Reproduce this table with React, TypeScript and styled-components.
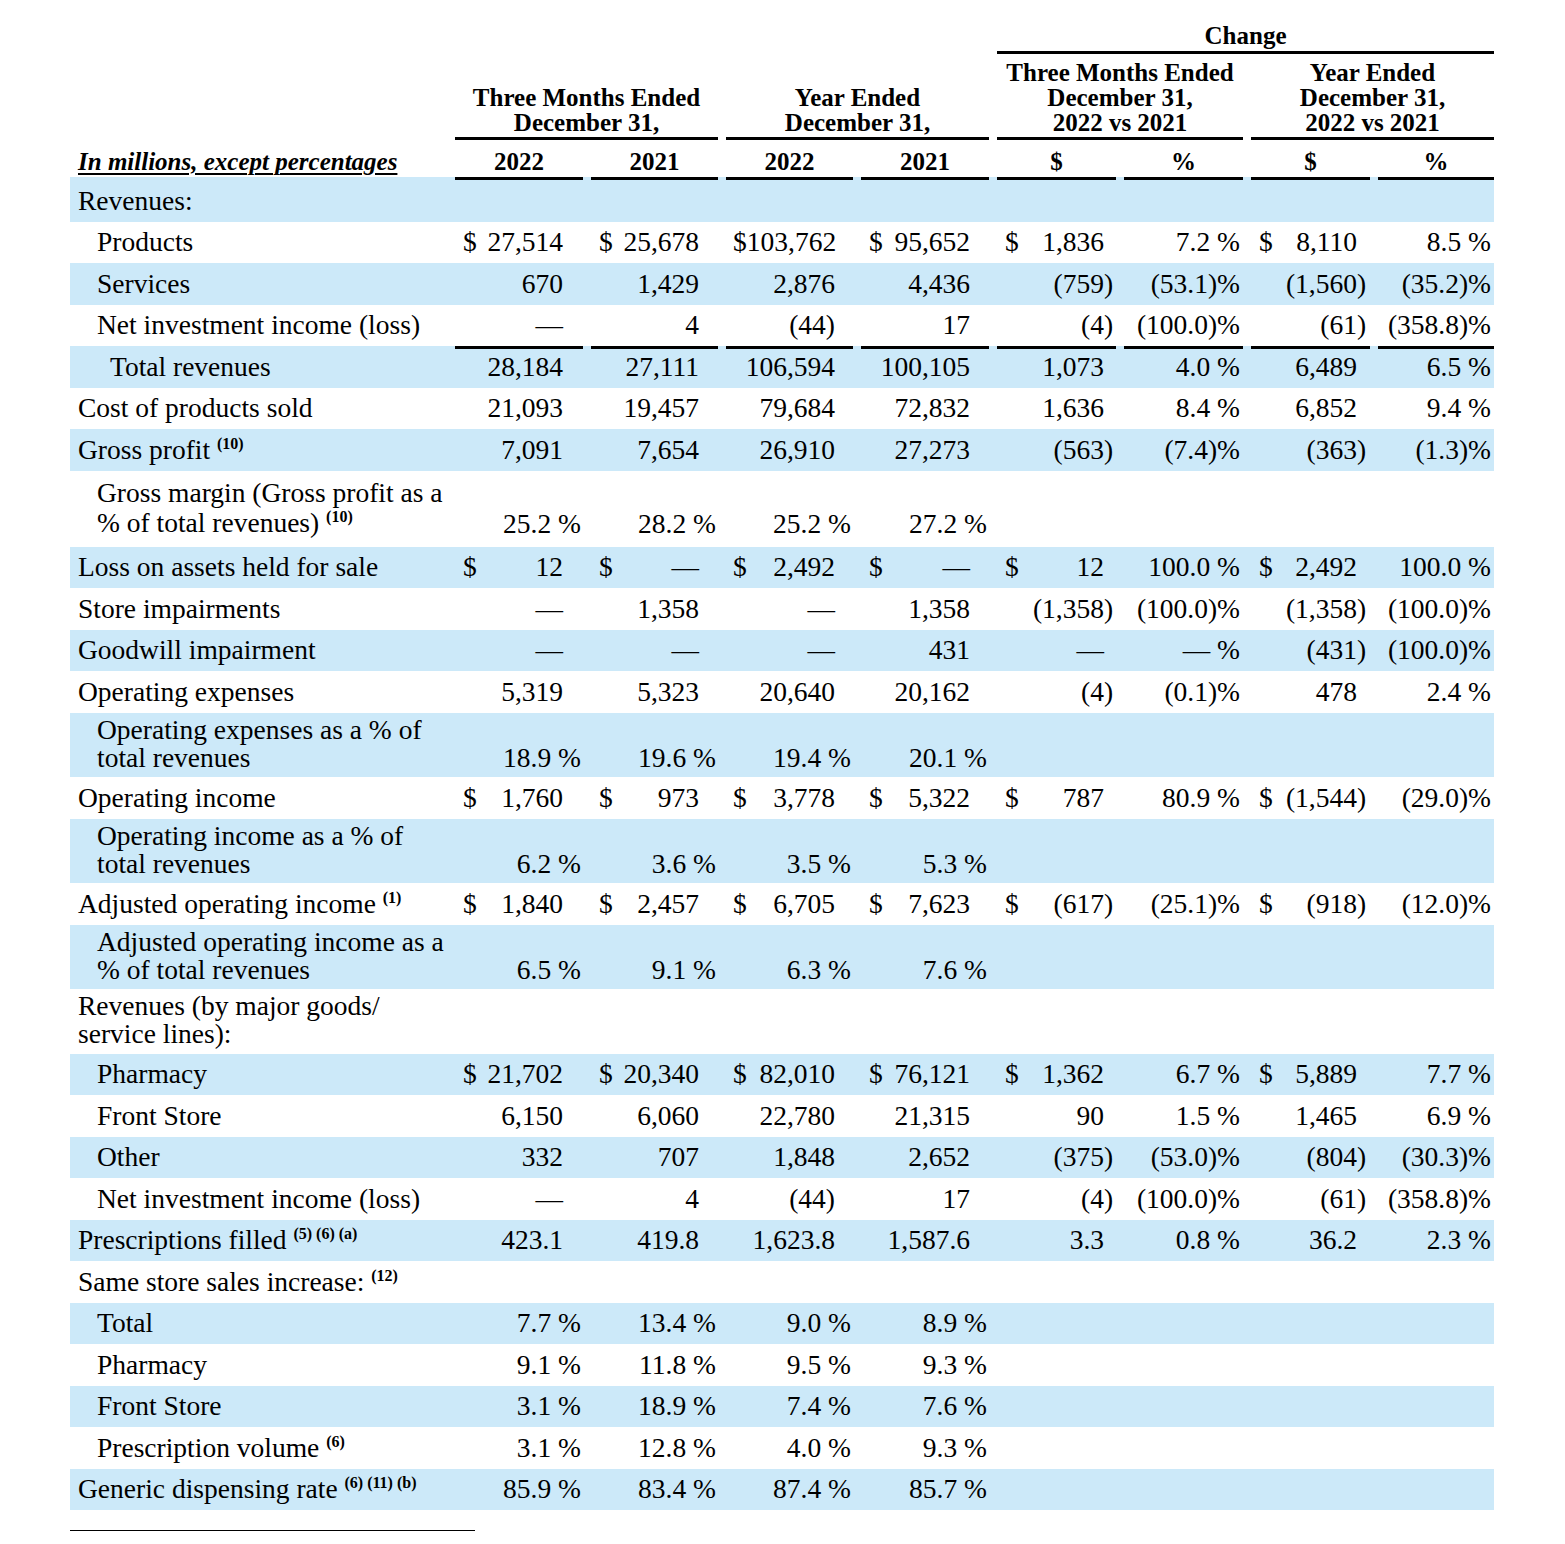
import React from 'react';
import styled, { createGlobalStyle } from 'styled-components';

const GlobalStyle = createGlobalStyle`
  html, body { margin: 0; padding: 0; background: #ffffff; }
  body { font-family: "Liberation Serif", "Times New Roman", serif; color: #000; }
`;

const COLS = '377px 128px 127px 127px 128px 119px 119px 119px 116px';
const BLUE = '#cce9f9';

const Page = styled.div`
  width: 1424px;
  padding: 0 0 40px 70px;
`;

const HeadRow = styled.div<{ $pt: number }>`
  display: grid;
  grid-template-columns: ${COLS};
  column-gap: 8px;
  align-items: end;
  padding-top: ${(p) => p.$pt}px;
  font-weight: 700;
  font-size: 25px;
  line-height: 25px;
`;

const HeadCell = styled.div<{ $col: number; $span?: number; $rule?: boolean; $pb?: number }>`
  grid-column: ${(p) => p.$col} / span ${(p) => p.$span ?? 1};
  text-align: center;
  white-space: nowrap;
  padding-bottom: ${(p) => p.$pb ?? 0}px;
  border-bottom: ${(p) => (p.$rule ? '3px solid #000' : '0')};
`;

const UnitsLabel = styled.div<{ $pb: number }>`
  grid-column: 1 / span 1;
  padding-left: 8px;
  padding-bottom: ${(p) => p.$pb}px;
  font-style: italic;
  text-decoration: underline;
  text-decoration-thickness: 2px;
  text-underline-offset: 3px;
  white-space: nowrap;
`;

const Row = styled.div<{ $h: number; $pb: number; $shade: boolean }>`
  display: grid;
  grid-template-columns: ${COLS};
  column-gap: 8px;
  box-sizing: border-box;
  height: ${(p) => p.$h}px;
  padding-bottom: ${(p) => p.$pb}px;
  background: ${(p) => (p.$shade ? BLUE : 'transparent')};
  font-size: 27.5px;
  line-height: 28px;
`;

const Label = styled.div<{ $indent: number; $lh: number }>`
  align-self: end;
  padding-left: ${(p) => p.$indent}px;
  line-height: ${(p) => p.$lh}px;
  white-space: nowrap;
`;

const Value = styled.div<{ $pl: number; $pr: number; $rule: boolean }>`
  display: flex;
  justify-content: space-between;
  align-items: flex-end;
  padding: 0 ${(p) => p.$pr}px 0 ${(p) => p.$pl}px;
  border-top: ${(p) => (p.$rule ? '3px solid #000' : '0')};
  white-space: nowrap;
`;

const Hang = styled.span`
  margin-right: -0.333em;
`;

const Sup = styled.sup`
  font-size: 16px;
  font-weight: 700;
  line-height: 0;
  vertical-align: baseline;
  position: relative;
  top: -10px;
`;

const FootRule = styled.div`
  width: 405px;
  margin-top: 20px;
  border-top: 1px solid #000;
`;

type Kind = 'single' | 'double' | 'tall';

interface RowDef {
  label: React.ReactNode;
  indent: number;
  vals?: string[];
  kind?: Kind;
  ruleAbove?: boolean;
}

const CFG = [
  { pl: 8, numPr: 20, pctPr: 2, hang: false },
  { pl: 8, numPr: 19, pctPr: 2, hang: false },
  { pl: 7, numPr: 18, pctPr: 2, hang: false },
  { pl: 8, numPr: 19, pctPr: 2, hang: false },
  { pl: 8, numPr: 12, pctPr: 3, hang: true },
  { pl: 0, numPr: 3, pctPr: 3, hang: false },
  { pl: 8, numPr: 13, pctPr: 3, hang: true },
  { pl: 0, numPr: 3, pctPr: 3, hang: false },
];

const IND = [8, 27, 40];

const NIIL = ['—', '4', '(44)', '17', '(4)', '(100.0)%', '(61)', '(358.8)%'];

const ROWS: RowDef[] = [
  { label: 'Revenues:', indent: 0, ruleAbove: true },
  { label: 'Products', indent: 1, vals: ['$27,514', '$25,678', '$103,762', '$95,652', '$1,836', '7.2 %', '$8,110', '8.5 %'] },
  { label: 'Services', indent: 1, vals: ['670', '1,429', '2,876', '4,436', '(759)', '(53.1)%', '(1,560)', '(35.2)%'] },
  { label: 'Net investment income (loss)', indent: 1, vals: NIIL },
  { label: 'Total revenues', indent: 2, ruleAbove: true, vals: ['28,184', '27,111', '106,594', '100,105', '1,073', '4.0 %', '6,489', '6.5 %'] },
  { label: 'Cost of products sold', indent: 0, vals: ['21,093', '19,457', '79,684', '72,832', '1,636', '8.4 %', '6,852', '9.4 %'] },
  {
    label: (
      <>
        Gross profit <Sup>(10)</Sup>
      </>
    ),
    indent: 0,
    vals: ['7,091', '7,654', '26,910', '27,273', '(563)', '(7.4)%', '(363)', '(1.3)%'],
  },
  {
    label: (
      <>
        Gross margin (Gross profit as a
        <br />% of total revenues) <Sup>(10)</Sup>
      </>
    ),
    indent: 1,
    kind: 'tall',
    vals: ['25.2 %', '28.2 %', '25.2 %', '27.2 %', '', '', '', ''],
  },
  { label: 'Loss on assets held for sale', indent: 0, vals: ['$12', '$—', '$2,492', '$—', '$12', '100.0 %', '$2,492', '100.0 %'] },
  { label: 'Store impairments', indent: 0, vals: ['—', '1,358', '—', '1,358', '(1,358)', '(100.0)%', '(1,358)', '(100.0)%'] },
  { label: 'Goodwill impairment', indent: 0, vals: ['—', '—', '—', '431', '—', '— %', '(431)', '(100.0)%'] },
  { label: 'Operating expenses', indent: 0, vals: ['5,319', '5,323', '20,640', '20,162', '(4)', '(0.1)%', '478', '2.4 %'] },
  {
    label: (
      <>
        Operating expenses as a % of
        <br />
        total revenues
      </>
    ),
    indent: 1,
    kind: 'double',
    vals: ['18.9 %', '19.6 %', '19.4 %', '20.1 %', '', '', '', ''],
  },
  { label: 'Operating income', indent: 0, vals: ['$1,760', '$973', '$3,778', '$5,322', '$787', '80.9 %', '$(1,544)', '(29.0)%'] },
  {
    label: (
      <>
        Operating income as a % of
        <br />
        total revenues
      </>
    ),
    indent: 1,
    kind: 'double',
    vals: ['6.2 %', '3.6 %', '3.5 %', '5.3 %', '', '', '', ''],
  },
  {
    label: (
      <>
        Adjusted operating income <Sup>(1)</Sup>
      </>
    ),
    indent: 0,
    vals: ['$1,840', '$2,457', '$6,705', '$7,623', '$(617)', '(25.1)%', '$(918)', '(12.0)%'],
  },
  {
    label: (
      <>
        Adjusted operating income as a
        <br />% of total revenues
      </>
    ),
    indent: 1,
    kind: 'double',
    vals: ['6.5 %', '9.1 %', '6.3 %', '7.6 %', '', '', '', ''],
  },
  {
    label: (
      <>
        Revenues (by major goods/
        <br />
        service lines):
      </>
    ),
    indent: 0,
    kind: 'double',
  },
  { label: 'Pharmacy', indent: 1, vals: ['$21,702', '$20,340', '$82,010', '$76,121', '$1,362', '6.7 %', '$5,889', '7.7 %'] },
  { label: 'Front Store', indent: 1, vals: ['6,150', '6,060', '22,780', '21,315', '90', '1.5 %', '1,465', '6.9 %'] },
  { label: 'Other', indent: 1, vals: ['332', '707', '1,848', '2,652', '(375)', '(53.0)%', '(804)', '(30.3)%'] },
  { label: 'Net investment income (loss)', indent: 1, vals: NIIL },
  {
    label: (
      <>
        Prescriptions filled <Sup>(5) (6) (a)</Sup>
      </>
    ),
    indent: 0,
    vals: ['423.1', '419.8', '1,623.8', '1,587.6', '3.3', '0.8 %', '36.2', '2.3 %'],
  },
  {
    label: (
      <>
        Same store sales increase: <Sup>(12)</Sup>
      </>
    ),
    indent: 0,
  },
  { label: 'Total', indent: 1, vals: ['7.7 %', '13.4 %', '9.0 %', '8.9 %', '', '', '', ''] },
  { label: 'Pharmacy', indent: 1, vals: ['9.1 %', '11.8 %', '9.5 %', '9.3 %', '', '', '', ''] },
  { label: 'Front Store', indent: 1, vals: ['3.1 %', '18.9 %', '7.4 %', '7.6 %', '', '', '', ''] },
  {
    label: (
      <>
        Prescription volume <Sup>(6)</Sup>
      </>
    ),
    indent: 1,
    vals: ['3.1 %', '12.8 %', '4.0 %', '9.3 %', '', '', '', ''],
  },
  {
    label: (
      <>
        Generic dispensing rate <Sup>(6) (11) (b)</Sup>
      </>
    ),
    indent: 0,
    vals: ['85.9 %', '83.4 %', '87.4 %', '85.7 %', '', '', '', ''],
  },
];

const SIZES: Record<Kind, { h: number; pb: number; lh: number }> = {
  single: { h: 41.5, pb: 6.7, lh: 28 },
  double: { h: 64.5, pb: 5.3, lh: 28 },
  tall: { h: 76, pb: 9, lh: 30 },
};

function renderValue(raw: string, idx: number, rule: boolean) {
  const cfg = CFG[idx];
  if (!raw) return <Value key={idx} $pl={cfg.pl} $pr={cfg.numPr} $rule={rule} />;
  const dollar = raw.startsWith('$');
  const body = dollar ? raw.slice(1) : raw;
  if (body.endsWith('%')) {
    return (
      <Value key={idx} $pl={cfg.pl} $pr={cfg.pctPr} $rule={rule}>
        <span>{dollar ? '$' : ''}</span>
        <span>{body}</span>
      </Value>
    );
  }
  const neg = cfg.hang && body.endsWith(')');
  return (
    <Value key={idx} $pl={cfg.pl} $pr={cfg.numPr} $rule={rule}>
      <span>{dollar ? '$' : ''}</span>
      <span>
        {neg ? body.slice(0, -1) : body}
        {neg && <Hang>)</Hang>}
      </span>
    </Value>
  );
}

export default function App() {
  return (
    <Page>
      <GlobalStyle />
      <HeadRow $pt={23}>
        <HeadCell $col={6} $span={4} $rule $pb={3}>
          Change
        </HeadCell>
      </HeadRow>
      <HeadRow $pt={5.5}>
        <HeadCell $col={2} $span={2} $rule $pb={2}>
          Three Months Ended
          <br />
          December 31,
        </HeadCell>
        <HeadCell $col={4} $span={2} $rule $pb={2}>
          Year Ended
          <br />
          December 31,
        </HeadCell>
        <HeadCell $col={6} $span={2} $rule $pb={2}>
          Three Months Ended
          <br />
          December 31,
          <br />
          2022 vs 2021
        </HeadCell>
        <HeadCell $col={8} $span={2} $rule $pb={2}>
          Year Ended
          <br />
          December 31,
          <br />
          2022 vs 2021
        </HeadCell>
      </HeadRow>
      <HeadRow $pt={9}>
        <UnitsLabel $pb={3.5}>In millions, except percentages</UnitsLabel>
        {['2022', '2021', '2022', '2021', '$', '%', '$', '%'].map((t, i) => (
          <HeadCell key={i} $col={i + 2} $pb={3.5}>
            {t}
          </HeadCell>
        ))}
      </HeadRow>
      {ROWS.map((r, i) => {
        const s = SIZES[r.kind ?? 'single'];
        const extra = i === 0 ? 3 : 0;
        const vals = r.vals ?? ['', '', '', '', '', '', '', ''];
        return (
          <Row key={i} $h={s.h + extra} $pb={s.pb} $shade={i % 2 === 0}>
            <Label $indent={IND[r.indent]} $lh={s.lh}>
              {r.label}
            </Label>
            {vals.map((v, j) => renderValue(v, j, !!r.ruleAbove))}
          </Row>
        );
      })}
      <FootRule />
    </Page>
  );
}
